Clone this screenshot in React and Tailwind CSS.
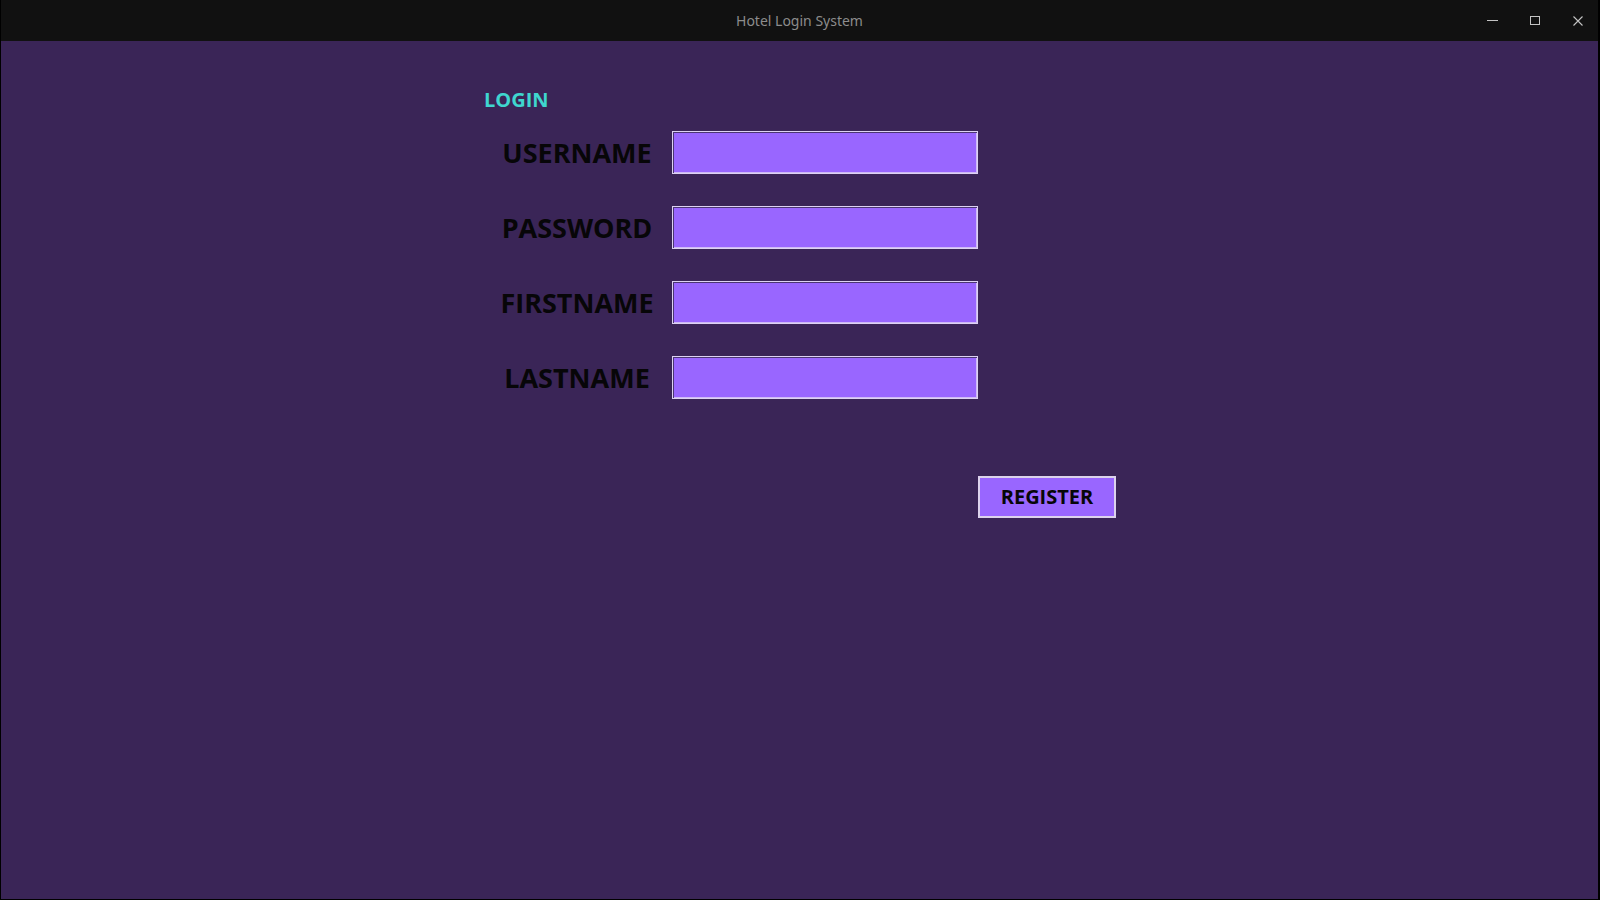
import React from "react";

function Field({ label }) {
  return (
    <div className="flex items-center h-[43px] pl-[7px]">
      <div className="w-[170px] text-center text-[27px] leading-none font-bold text-[#070608]">
        {label}
      </div>
      <div className="ml-[10px] w-[306px] h-full border border-[#ddd2f3] bg-[#9966ff] shadow-[inset_1px_1px_0_#4b3673,inset_-1px_-1px_0_#cdb9f7]" />
    </div>
  );
}

export default function App() {
  return (
    <div
      className="w-[1600px] h-[900px] bg-black overflow-hidden"
      style={{ fontFamily: '"Noto Sans", "Open Sans", sans-serif' }}
    >
      <div className="ml-[1px] w-[1597px] h-[899px] flex flex-col bg-[#3a2557]">
        {/* title bar */}
        <div className="relative h-[41px] shrink-0 bg-[#111111] flex items-center justify-center">
          <span className="text-[14px] text-[#8c8c8c] leading-none">Hotel Login System</span>
          <div className="absolute right-0 top-0 h-full flex items-center">
            <div className="w-[11px] h-[1px] bg-[#c4c4c4] mr-[32px]" />
            <div className="w-[10px] h-[9px] border border-[#c4c4c4] mr-[33px]" />
            <svg width="10" height="10" viewBox="0 0 10 10" className="mr-[15px]">
              <path d="M0.5 0.5 L9.5 9.5 M9.5 0.5 L0.5 9.5" stroke="#c4c4c4" strokeWidth="1.1" />
            </svg>
          </div>
        </div>

        {/* content */}
        <div
          className="flex flex-col pl-[484px] pt-[49px]"
          style={{ fontFamily: '"Open Sans", "Noto Sans", sans-serif' }}
        >
          <div className="-ml-[1px] h-[20px] text-[20px] leading-[20px] font-bold text-[#3fd6cf]">LOGIN</div>
          <div className="mt-[21px] flex flex-col gap-[32px]">
            <Field label="USERNAME" />
            <Field label="PASSWORD" />
            <Field label="FIRSTNAME" />
            <Field label="LASTNAME" />
          </div>
          <div className="mt-[77px] ml-[493px]">
            <button className="w-[138px] h-[42px] border-2 border-[#dcd3ec] bg-[#9966ff] text-[20px] leading-none font-bold text-[#070608] flex items-center justify-center">
              REGISTER
            </button>
          </div>
        </div>
      </div>
    </div>
  );
}
